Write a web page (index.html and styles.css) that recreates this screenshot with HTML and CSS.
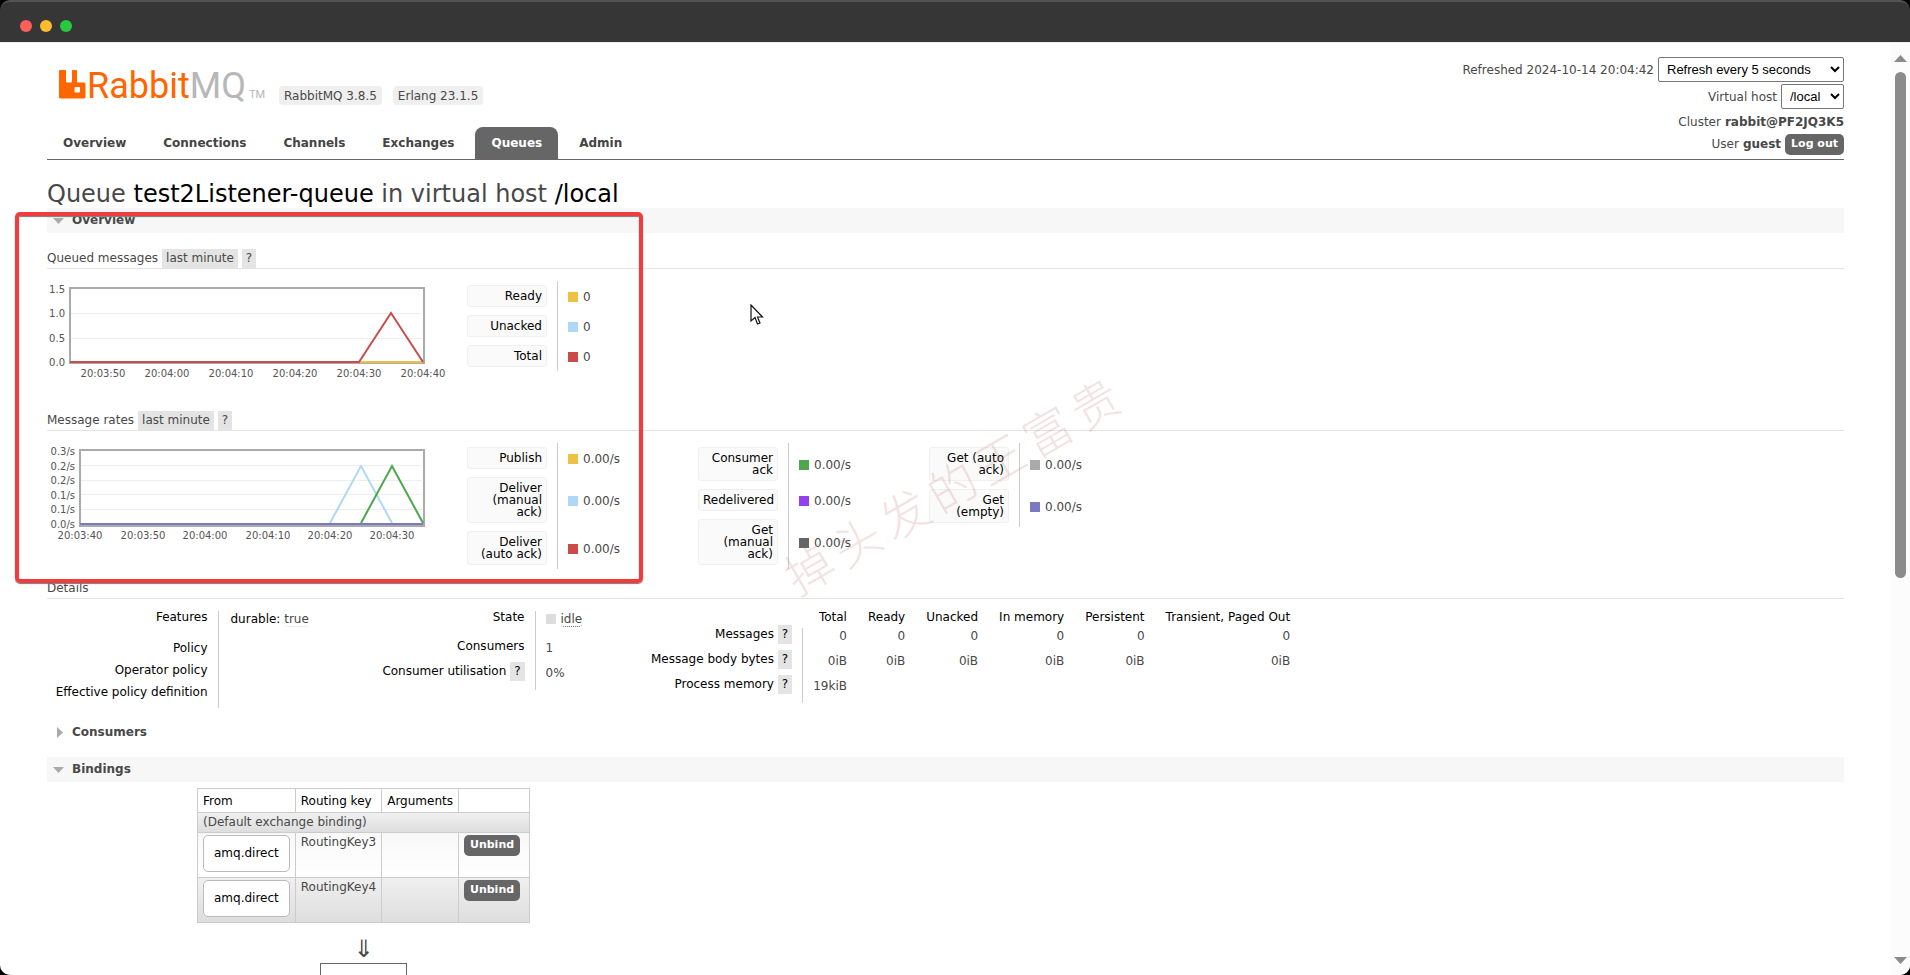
FILE: index.html
```html
<!DOCTYPE html>
<html lang="en">
<head>
<meta charset="utf-8">
<title>RabbitMQ Management</title>
<link rel="stylesheet" href="styles.css">
</head>
<body>
<div class="window">
  <div class="titlebar"><span class="dot red"></span><span class="dot amber"></span><span class="dot green"></span></div>
  <div class="viewport">
    <div class="page">
      <header class="header">
        <div class="brand">
          <svg class="logo" width="208" height="40" viewBox="0 0 208 40" role="img" aria-label="RabbitMQ">
            <path fill="#f60" fill-rule="evenodd" d="M1 4h5q1 0 1 1v10.500q0 1 1 1h4q1 0 1-1V5q0-1 1-1h3q1 0 1 1v10.500q0 1 1 1h6q1.500 0 1.500 1.500v13q0 1.500-1.500 1.500H1.500Q0 32.500 0 31V5Q0 4 1 4zM16.500 21q-1 0-1 1v3.500q0 1 1 1H20q1 0 1-1V22q0-1-1-1z"/>
            <text class="logo-text" x="28" y="32"><tspan fill="#f60">Rabbit</tspan><tspan fill="#b7b7b7">MQ</tspan></text>
            <text class="logo-tm" x="190" y="32">TM</text>
          </svg>
          <span class="version">RabbitMQ 3.8.5</span>
          <span class="version">Erlang 23.1.5</span>
        </div>
        <ul class="login">
          <li><label for="refresh">Refreshed 2024-10-14 20:04:42</label> <select id="refresh" class="refresh"><option>Refresh every 5 seconds</option></select></li>
          <li><label for="vhost">Virtual host</label> <select id="vhost" class="vhost"><option>/local</option></select></li>
          <li class="plain">Cluster <b>rabbit@PF2JQ3K5</b></li>
          <li class="plain">User <b>guest</b> <button class="btn">Log out</button></li>
        </ul>
        <nav class="tabs">
          <a href="#">Overview</a><a href="#">Connections</a><a href="#">Channels</a><a href="#">Exchanges</a><a href="#" class="selected">Queues</a><a href="#">Admin</a>
        </nav>
      </header>
      <main>
        <h1>Queue <b>test2Listener-queue</b> in virtual host <b>/local</b></h1>
        <h2 class="open"><svg width="12" height="12"><path d="M0 3h11l-5.500 6z" fill="#aaa"/></svg>Overview</h2>

        <h3 class="first">Queued messages <button class="tag">last minute</button> <button class="tag">?</button></h3>
        <div class="stats queued">
          <svg class="chart" width="410" height="110">
            <g stroke="#eee"><path d="M23 44.500h352M23 69.500h352"/></g>
            <rect x="23" y="19" width="354" height="75" fill="none" stroke="#aaa" stroke-width="2"/>
            <path d="M312 93h64" stroke="#edc240" stroke-width="2"/>
            <path d="M23 93h289l32-49 32 49" fill="none" stroke="#cb4b4b" stroke-width="2"/>
            <g text-anchor="end"><text x="18" y="24">1.5</text><text x="18" y="48">1.0</text><text x="18" y="73">0.5</text><text x="18" y="97">0.0</text></g>
            <g text-anchor="middle"><text x="56" y="108">20:03:50</text><text x="120" y="108">20:04:00</text><text x="184" y="108">20:04:10</text><text x="248" y="108">20:04:20</text><text x="312" y="108">20:04:30</text><text x="376" y="108">20:04:40</text></g>
          </svg>
          <table class="legend">
            <tr><th><button>Ready</button></th><td><i class="c-yellow"></i>0</td></tr>
            <tr><th><button>Unacked</button></th><td><i class="c-blue"></i>0</td></tr>
            <tr><th><button>Total</button></th><td><i class="c-red"></i>0</td></tr>
          </table>
        </div>

        <h3>Message rates <button class="tag">last minute</button> <button class="tag">?</button></h3>
        <div class="stats rates">
          <svg class="chart" width="410" height="110">
            <g stroke="#eee"><path d="M33 34.500h342M33 49.500h342M33 63.500h342M33 78.500h342"/></g>
            <rect x="33" y="19" width="344" height="76" fill="none" stroke="#aaa" stroke-width="2"/>
            <path d="M283 92l31-57 31 57" fill="none" stroke="#afd8f8" stroke-width="2"/>
            <path d="M314 92l31-57 31 57" fill="none" stroke="#4da74d" stroke-width="2"/>
            <path d="M33 93h343" stroke="#7c79c3" stroke-width="2"/>
            <g text-anchor="end"><text x="28" y="24">0.3/s</text><text x="28" y="39">0.2/s</text><text x="28" y="53">0.2/s</text><text x="28" y="68">0.1/s</text><text x="28" y="82">0.1/s</text><text x="28" y="97">0.0/s</text></g>
            <g text-anchor="middle"><text x="33" y="108">20:03:40</text><text x="96" y="108">20:03:50</text><text x="158" y="108">20:04:00</text><text x="221" y="108">20:04:10</text><text x="283" y="108">20:04:20</text><text x="345" y="108">20:04:30</text></g>
          </svg>
          <table class="legend">
            <tr><th><button>Publish</button></th><td><i class="c-yellow"></i>0.00/s</td></tr>
            <tr><th><button>Deliver<br>(manual<br>ack)</button></th><td><i class="c-blue"></i>0.00/s</td></tr>
            <tr><th><button>Deliver<br>(auto ack)</button></th><td><i class="c-red"></i>0.00/s</td></tr>
          </table>
          <table class="legend">
            <tr><th><button>Consumer<br>ack</button></th><td><i class="c-green"></i>0.00/s</td></tr>
            <tr><th><button>Redelivered</button></th><td><i class="c-purple"></i>0.00/s</td></tr>
            <tr><th><button>Get<br>(manual<br>ack)</button></th><td><i class="c-dark"></i>0.00/s</td></tr>
          </table>
          <table class="legend">
            <tr><th><button>Get (auto<br>ack)</button></th><td><i class="c-grey"></i>0.00/s</td></tr>
            <tr><th><button>Get<br>(empty)</button></th><td><i class="c-violet"></i>0.00/s</td></tr>
          </table>
        </div>

        <h3>Details</h3>
        <div class="details">
          <table class="facts policy">
            <tr class="tall"><th>Features</th><td><span class="key">durable:</span> <abbr class="faint">true</abbr></td></tr>
            <tr><th>Policy</th><td></td></tr>
            <tr><th>Operator policy</th><td></td></tr>
            <tr><th>Effective policy definition</th><td></td></tr>
          </table>
          <table class="facts state">
            <tr class="tall"><th>State</th><td><i class="c-idle"></i><abbr>idle</abbr></td></tr>
            <tr><th>Consumers</th><td>1</td></tr>
            <tr><th>Consumer utilisation <button class="tag">?</button></th><td>0%</td></tr>
          </table>
          <table class="facts sizes">
            <tr class="head"><td></td><th>Total</th><th>Ready</th><th>Unacked</th><th>In memory</th><th>Persistent</th><th>Transient, Paged Out</th></tr>
            <tr><th>Messages <button class="tag">?</button></th><td>0</td><td>0</td><td>0</td><td>0</td><td>0</td><td>0</td></tr>
            <tr><th>Message body bytes <button class="tag">?</button></th><td>0iB</td><td>0iB</td><td>0iB</td><td>0iB</td><td>0iB</td><td>0iB</td></tr>
            <tr><th>Process memory <button class="tag">?</button></th><td>19kiB</td></tr>
          </table>
        </div>

        <h2><svg width="12" height="12"><path d="M4 0v11l6-5.500z" fill="#aaa"/></svg>Consumers</h2>
        <h2 class="open spaced"><svg width="12" height="12"><path d="M0 3h11l-5.500 6z" fill="#aaa"/></svg>Bindings</h2>
        <div class="bindings">
          <table class="list">
            <thead><tr><th>From</th><th>Routing key</th><th>Arguments</th><th></th></tr></thead>
            <tbody>
              <tr class="alt"><td colspan="4">(Default exchange binding)</td></tr>
              <tr class="light"><td><a href="#" class="exchange">amq.direct</a></td><td>RoutingKey3</td><td></td><td class="action"><button class="btn">Unbind</button></td></tr>
              <tr class="alt"><td><a href="#" class="exchange">amq.direct</a></td><td>RoutingKey4</td><td></td><td class="action"><button class="btn">Unbind</button></td></tr>
            </tbody>
          </table>
          <div class="arrow">⇓</div>
          <div class="queue"></div>
        </div>
      </main>
      <div class="highlight"></div>
      <div class="watermark"><span>掉</span><span>头</span><span>发</span><span>的</span><span>王</span><span>富</span><span>贵</span></div>
      <svg class="cursor" width="14" height="22" viewBox="0 0 14 22"><path d="M1 1v16l4-3.500 2.500 6.500 2.500-1-2.500-6H12.500z" fill="#fff" stroke="#111" stroke-width="1.200"/></svg>
    </div>
    <div class="scrollbar">
      <svg width="13" height="7"><path d="M0 7h13L6.500 0z"/></svg>
      <div class="thumb"></div>
      <div class="track"></div>
      <svg width="13" height="7"><path d="M0 0h13L6.500 7z"/></svg>
    </div>
  </div>
</div>
</body>
</html>
```

FILE: styles.css
```css
* { box-sizing: border-box; }
body { margin: 0; background: #000; color: #484848; font: 12px/16px "DejaVu Sans", Verdana, sans-serif; }
button { font: inherit; color: inherit; border: 0; margin: 0; }
table { border-collapse: collapse; }
th { font-weight: normal; color: #000; }
th, td { padding: 0; }
i { display: inline-block; width: 10px; height: 10px; margin-right: 5px; vertical-align: -1px; }

.window { display: flex; flex-direction: column; height: 100vh; overflow: hidden; border-radius: 10px; background: #363636; }
.titlebar { display: flex; flex: none; align-items: center; gap: 8px; height: 42px; padding: 8px 20px 0; border-top: 2px solid #545454; border-radius: 10px 10px 0 0; }
.dot { width: 12px; height: 12px; border-radius: 50%; }
.red { background: #ff5f57; }
.amber { background: #febc2e; }
.green { background: #28c840; }
.viewport { display: flex; flex: 1; min-height: 0; background: #fff; border-top: 1px solid #eee; }
.page { position: relative; flex: 1; min-width: 0; padding: 14px 47px 0; overflow: hidden; }

.scrollbar { display: flex; flex-direction: column; align-items: center; width: 19px; padding: 12px 0 11px; background: #fcfcfc; fill: #8b8b8b; }
.scrollbar svg { flex: none; }
.thumb { flex: 4; width: 11px; margin-top: 10px; border-radius: 6px; background: #8b8b8b; }
.track { flex: 3; }

.header { display: grid; grid-template-columns: 1fr auto; border-bottom: 1px solid #666; }
.brand { display: flex; align-items: flex-start; gap: 12px; padding: 9px 0 0 12px; }
.logo-text { font: 36px Roboto, sans-serif; }
.logo-tm { font: 11px Roboto, sans-serif; fill: #b7b7b7; }
.version { margin-top: 20px; padding: 2px 5px 1px; border-radius: 4px; background: #efefef; }
.version + .version { margin-left: -1px; }
.login { grid-column: 2; grid-row: 1 / 3; display: flex; flex-direction: column; align-items: flex-end; margin: 0; padding: 0 0 4px; list-style: none; }
.login li { display: flex; align-items: center; gap: 4px; height: 25px; margin-bottom: 2px; }
.login li.plain { height: 22px; margin: 0; }
.login select { height: 25px; padding: 0 4px; border: 1px solid #767676; border-radius: 2px; background: #fff; color: #000; font: 13px "Liberation Sans", Arial, sans-serif; }
.refresh { width: 186px; }
.vhost { width: 63px; }
.btn { padding: 2px 6px 3px; border-radius: 5px; background: #666; color: #fff; font-size: 11px; font-weight: bold; }
.tabs { display: flex; gap: 5px; align-self: end; }
.tabs a { padding: 8px 16px; border-radius: 8px 8px 0 0; color: #444; font-weight: bold; text-decoration: none; }
.tabs .selected { background: #666; color: #fff; }

h1 { margin: 20px 0 0; font: 24px/28px "DejaVu Sans", Verdana, sans-serif; }
h1 b { color: #000; font-weight: normal; }
h2 { display: flex; align-items: center; gap: 7px; margin: 0; padding: 4px 6px; font: bold 12px/17px "DejaVu Sans", Verdana, sans-serif; }
h2.open { background: #f7f7f7; }
.spaced { margin-top: 12px; }
h3 { display: flex; gap: 4px; margin: 0; border-bottom: 1px solid #e4e4e4; font: 12px/19px "DejaVu Sans", Verdana, sans-serif; }
.first { margin-top: 16px; }
.tag { padding: 0 4px; background: #e4e4e4; line-height: 19px; }

.chart { flex: none; }
.chart text { font: 10px "DejaVu Sans", Verdana, sans-serif; fill: #545454; }
.stats { display: flex; align-items: flex-start; }
.stats .chart { margin-right: 10px; }
.queued { min-height: 142px; }
.rates { min-height: 148px; }
.legend { width: 231px; margin-top: 12px; }
.legend th { width: 90px; padding: 4px 10px 4px 0; border-right: 1px solid #ccc; }
.legend button { display: block; width: 80px; padding: 4px; border: 1px solid #f0f0f0; border-radius: 3px; background: #fafafa; color: #000; line-height: 12px; text-align: right; white-space: nowrap; }
.legend td { padding: 2px 0 0 10px; }
.c-yellow { background: #edc240; }
.c-blue { background: #afd8f8; }
.c-red { background: #cb4b4b; }
.c-green { background: #4da74d; }
.c-purple { background: #9440ed; }
.c-dark { background: #666; }
.c-grey { background: #aaa; }
.c-violet { background: #7c79c3; }
.c-idle { background: #ddd; }

.details { display: flex; align-items: flex-start; min-height: 121px; padding-top: 12px; }
.facts th { height: 22px; padding-right: 10px; border-right: 1px solid #ccc; line-height: 12px; text-align: right; vertical-align: top; white-space: nowrap; }
.facts td { padding: 1px 0 0 10px; vertical-align: top; line-height: 14px; }
.facts .key { color: #000; }
.facts abbr { border-bottom: 1px dotted #666; border-radius: 3px; }
.facts .faint { border-color: #ddd; }
.facts .tag { margin: -4px 0; }
.policy { width: 279px; }
.policy th { width: 171px; }
.policy td { padding-left: 12px; }
.policy .tall th { height: 31px; }
.state { width: 275px; }
.state th { width: 209px; height: 25px; }
.state .tall th { height: 29px; }
.sizes { margin-left: 50px; }
.sizes th { height: 25px; }
.sizes td { padding: 1px 0 0 10px; text-align: right; }
.sizes .head th { height: 17px; padding: 0 0 0 21px; border: 0; }
.sizes .head th:nth-child(2) { padding-left: 15px; }

.bindings { display: flex; flex-direction: column; align-items: center; width: max-content; margin: 6px 0 0 150px; }
.list td, .list th { border: 1px solid #ccc; text-align: left; vertical-align: top; }
.list th { padding: 4px 5px 3px; }
.list td { padding: 1px 5px 2px; }
.alt { background: linear-gradient(#f0f0f0, #ddd); }
.light { background: linear-gradient(#f8f8f8, #fff); }
.exchange { display: block; margin: 1px 0 3px; padding: 10px; border: 1px solid #bbb; border-radius: 5px; background: #fff; color: #000; line-height: 15px; text-decoration: none; }
.list .action { width: 71px; padding-top: 2px; }
.arrow { margin-top: 12px; font-size: 24px; line-height: 28px; }
.queue { width: 87px; height: 37px; border: 1px solid #666; }

.highlight { position: absolute; top: 169px; left: 15px; width: 628px; height: 371px; border: 4px solid #f03c3c; border-radius: 5px; box-shadow: 0 1px 1px #777, inset 0 1px 1px #777; pointer-events: none; }
.watermark { position: absolute; top: 413px; left: 762px; display: flex; gap: 7px; transform: rotate(-30deg); color: rgba(190, 110, 110, .2); font: 300 48px/56px "Noto Sans CJK SC", sans-serif; pointer-events: none; }
.cursor { position: absolute; top: 261px; left: 750px; }
```
